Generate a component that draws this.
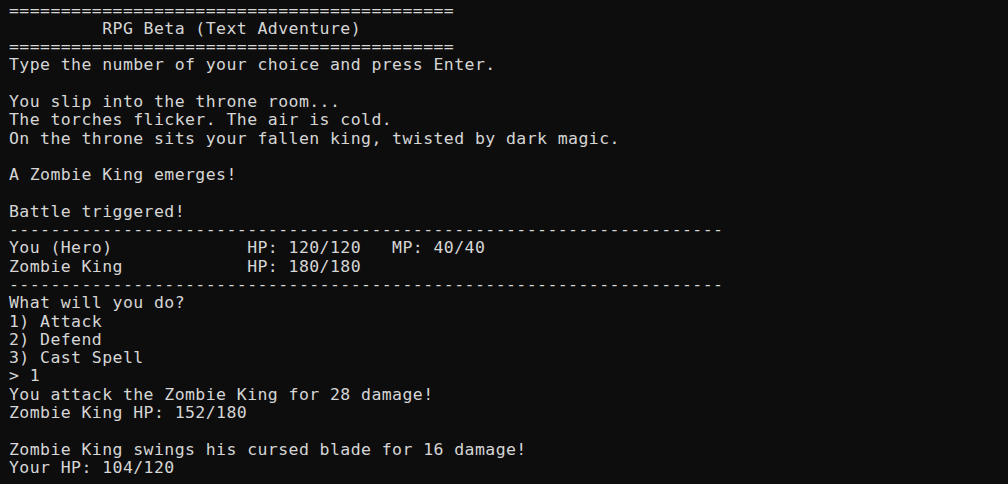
const eq = "=".repeat(43);
const dash = "-".repeat(69);

const lines = [
  eq,
  "         RPG Beta (Text Adventure)",
  eq,
  "Type the number of your choice and press Enter.",
  "",
  "You slip into the throne room...",
  "The torches flicker. The air is cold.",
  "On the throne sits your fallen king, twisted by dark magic.",
  "",
  "A Zombie King emerges!",
  "",
  "Battle triggered!",
  dash,
  "You (Hero)             HP: 120/120   MP: 40/40",
  "Zombie King            HP: 180/180",
  dash,
  "What will you do?",
  "1) Attack",
  "2) Defend",
  "3) Cast Spell",
  "> 1",
  "You attack the Zombie King for 28 damage!",
  "Zombie King HP: 152/180",
  "",
  "Zombie King swings his cursed blade for 16 damage!",
  "Your HP: 104/120",
];

export default function App() {
  return (
    <main className="h-[484px] w-[1008px] overflow-hidden bg-[#0d0d0d] pl-[9px] pt-[1.5px] font-['DejaVu_Sans_Mono',monospace] text-[16.5px] leading-[18.3px] tracking-[0.42px] text-[#d6d6d6]">
      {lines.map((line, i) => (
        <div key={i} className="h-[18.3px] whitespace-pre">
          {line}
        </div>
      ))}
    </main>
  );
}
